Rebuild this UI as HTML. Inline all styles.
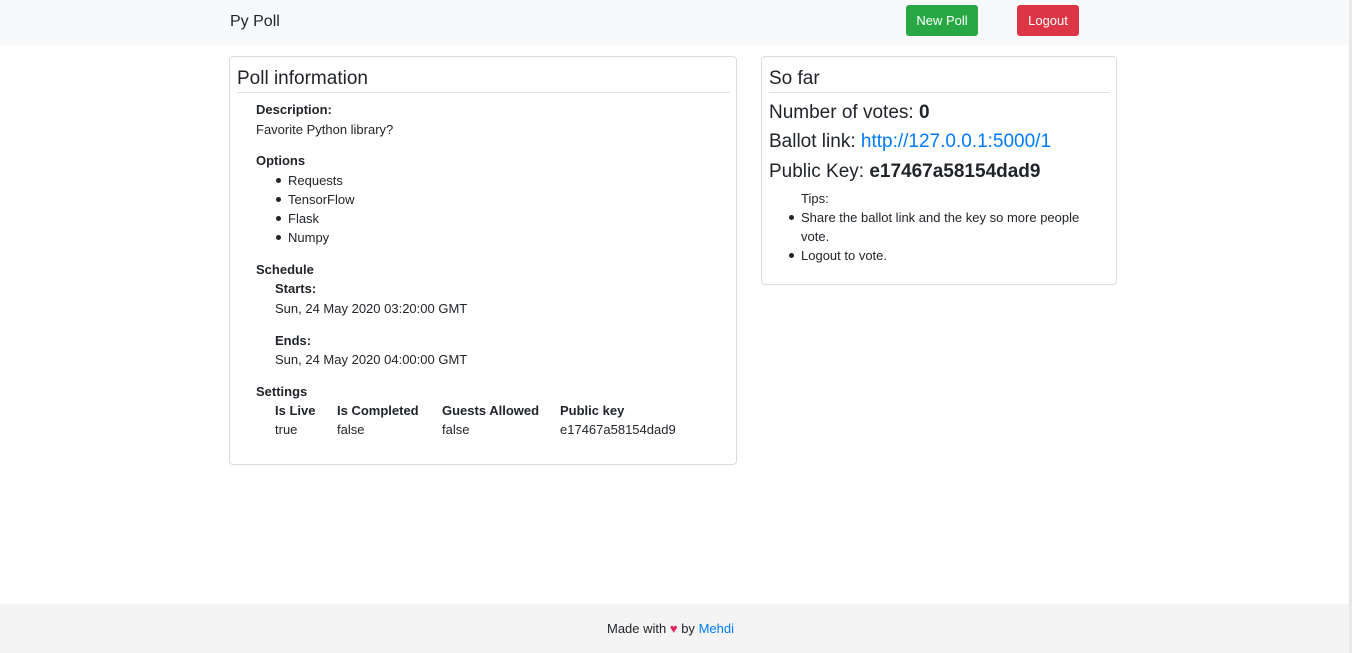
<!DOCTYPE html>
<html><head><style>
*{margin:0;padding:0;box-sizing:border-box}
body{width:1352px;height:653px;position:relative;font-family:"Liberation Sans",sans-serif;color:#212529;background:#fff;overflow:hidden;font-size:13px}
.a{position:absolute;white-space:nowrap;margin-top:1px}
.nav{position:absolute;left:0;top:0;width:1349px;height:45px;background:#f8f9fa}
.btn{position:absolute;top:5px;height:31px;color:#fff;border-radius:3px;font-size:13px;line-height:32px;text-align:center}
.card{position:absolute;border:1px solid #dcdcdc;border-radius:4px}
.hr{position:absolute;height:1px;background:#dee2e6}
b{font-weight:bold}
.dot{position:absolute;width:5px;height:5px;border-radius:50%;background:#212529}
.foot{position:absolute;left:0;top:604px;width:1349px;height:49px;background:#f4f4f4}
</style></head><body>
<div class="nav"></div>
<div class="a" style="left:230px;top:12px;font-size:16px">Py Poll</div>
<div class="btn" style="left:906px;width:72px;background:#28a745">New Poll</div>
<div class="btn" style="left:1017px;width:62px;background:#dc3545">Logout</div>
<div style="position:absolute;left:1349px;top:0;width:3px;height:653px;background:#e8e8e8"></div>

<div class="card" style="left:229px;top:56px;width:508px;height:409px"></div>
<div class="a" style="left:237px;top:67px;font-size:19px">Poll information</div>
<div class="hr" style="left:237px;top:92px;width:493px"></div>
<div class="a" style="left:256px;top:101px"><b>Description:</b></div>
<div class="a" style="left:256px;top:121px">Favorite Python library?</div>
<div class="a" style="left:256px;top:152px"><b>Options</b></div>
<div class="dot" style="left:276px;top:178px"></div><div class="a" style="left:288px;top:172px">Requests</div>
<div class="dot" style="left:276px;top:197px"></div><div class="a" style="left:288px;top:191px">TensorFlow</div>
<div class="dot" style="left:276px;top:216px"></div><div class="a" style="left:288px;top:210px">Flask</div>
<div class="dot" style="left:276px;top:235px"></div><div class="a" style="left:288px;top:229px">Numpy</div>
<div class="a" style="left:256px;top:261px"><b>Schedule</b></div>
<div class="a" style="left:275px;top:280px"><b>Starts:</b></div>
<div class="a" style="left:275px;top:300px">Sun, 24 May 2020 03:20:00 GMT</div>
<div class="a" style="left:275px;top:332px"><b>Ends:</b></div>
<div class="a" style="left:275px;top:351px">Sun, 24 May 2020 04:00:00 GMT</div>
<div class="a" style="left:256px;top:383px"><b>Settings</b></div>
<div class="a" style="left:275px;top:402px"><b>Is Live</b></div>
<div class="a" style="left:337px;top:402px"><b>Is Completed</b></div>
<div class="a" style="left:442px;top:402px"><b>Guests Allowed</b></div>
<div class="a" style="left:560px;top:402px"><b>Public key</b></div>
<div class="a" style="left:275px;top:421px">true</div>
<div class="a" style="left:337px;top:421px">false</div>
<div class="a" style="left:442px;top:421px">false</div>
<div class="a" style="left:560px;top:421px">e17467a58154dad9</div>

<div class="card" style="left:761px;top:56px;width:356px;height:229px"></div>
<div class="a" style="left:769px;top:67px;font-size:19px">So far</div>
<div class="hr" style="left:769px;top:92px;width:341px"></div>
<div class="a" style="left:769px;top:101px;font-size:19px">Number of votes: <b>0</b></div>
<div class="a" style="left:769px;top:130px;font-size:19px">Ballot link: <span style="color:#007bff">http://127.0.0.1:5000/1</span></div>
<div class="a" style="left:769px;top:160px;font-size:19px">Public Key: <b>e17467a58154dad9</b></div>
<div class="a" style="left:801px;top:190px">Tips:</div>
<div class="dot" style="left:789px;top:215px"></div><div class="a" style="left:801px;top:209px">Share the ballot link and the key so more people</div>
<div class="a" style="left:801px;top:228px">vote.</div>
<div class="dot" style="left:789px;top:253px"></div><div class="a" style="left:801px;top:247px">Logout to vote.</div>

<div class="foot"></div>
<div class="a" style="left:607px;top:620px">Made with <span style="color:#e0245e">♥</span> by <span style="color:#007bff">Mehdi</span></div>
</body></html>
